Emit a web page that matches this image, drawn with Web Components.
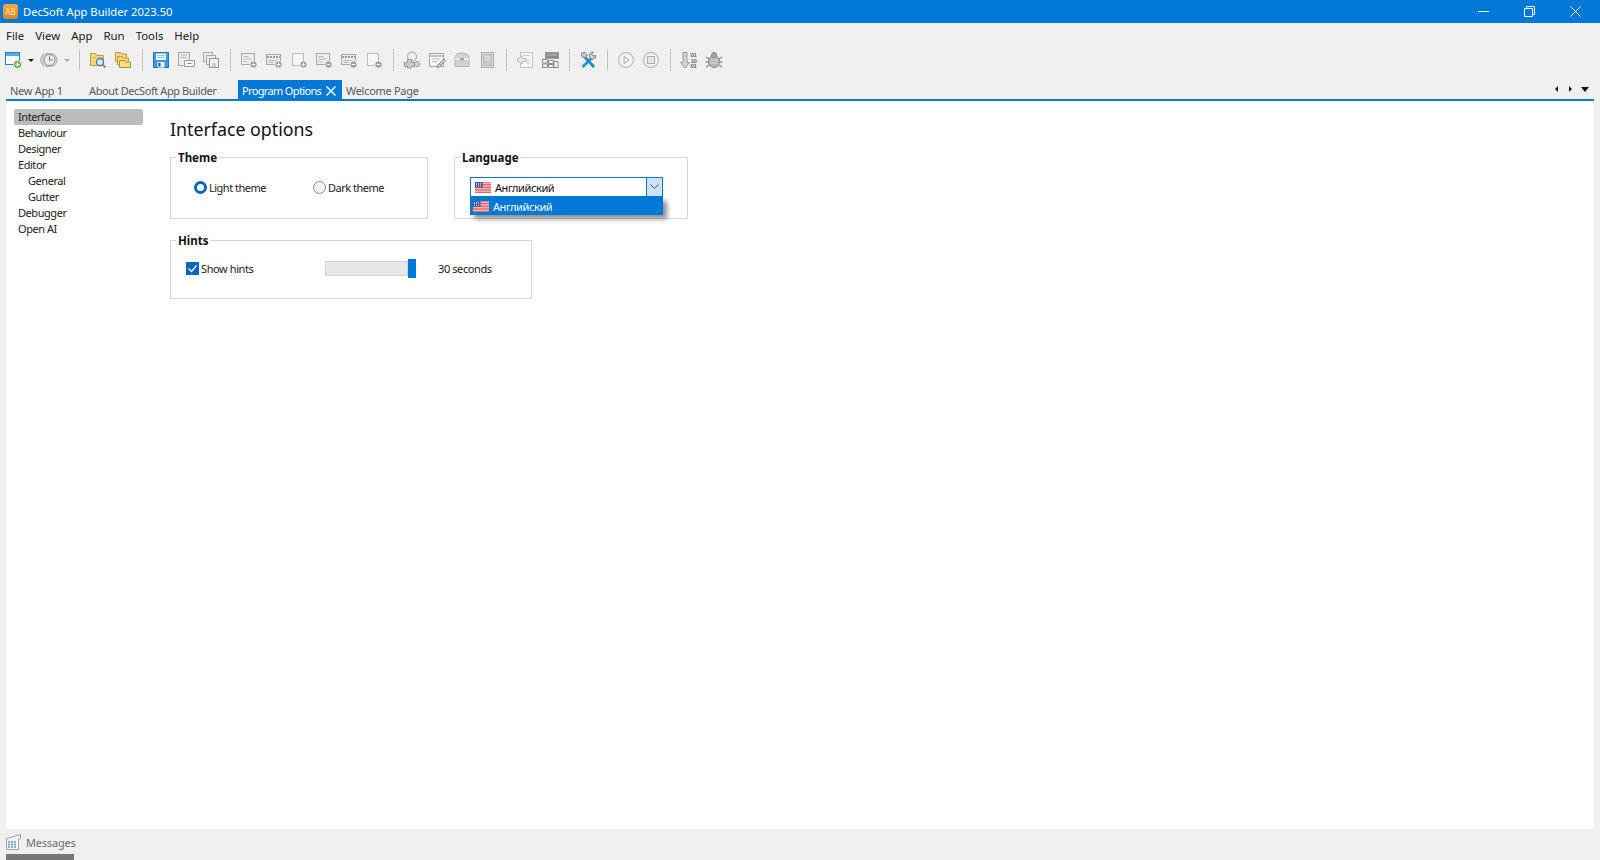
<!DOCTYPE html>
<html lang="en">
<head>
<meta charset="utf-8">
<title>DecSoft App Builder 2023.50</title>
<style>
  html, body { margin: 0; height: 100%; background: #f0f0f0; overflow: hidden; }
  body { font: 11px "Noto Sans", "Liberation Sans", sans-serif; letter-spacing: -.4px; color: #1a1a1a; }
</style>
</head>
<body>
<app-shell>
  <win-titlebar slot="title">DecSoft App Builder 2023.50</win-titlebar>
  <menu-bar slot="menu">
    <span>File</span><span>View</span><span>App</span><span>Run</span><span>Tools</span><span>Help</span>
  </menu-bar>
  <tool-bar slot="tools">
    <tool-btn icon="new"></tool-btn><tool-arrow></tool-arrow>
    <tool-btn icon="clock"></tool-btn><tool-arrow disabled></tool-arrow>
    <tool-sep></tool-sep>
    <tool-btn wide icon="folderSearch"></tool-btn><tool-btn wide icon="folders"></tool-btn>
    <tool-sep></tool-sep>
    <tool-btn wide icon="save"></tool-btn><tool-btn wide icon="saveAs"></tool-btn><tool-btn wide icon="saveAll"></tool-btn>
    <tool-sep></tool-sep>
    <tool-btn wide icon="formAdd"></tool-btn><tool-btn wide icon="barAdd"></tool-btn><tool-btn wide icon="blankAdd"></tool-btn>
    <tool-btn wide icon="formDel"></tool-btn><tool-btn wide icon="barDel"></tool-btn><tool-btn wide icon="blankDel"></tool-btn>
    <tool-sep></tool-sep>
    <tool-btn wide icon="puzzle"></tool-btn><tool-btn wide icon="note"></tool-btn><tool-btn wide icon="box"></tool-btn><tool-btn wide icon="book"></tool-btn>
    <tool-sep></tool-sep>
    <tool-btn wide icon="back"></tool-btn><tool-btn wide icon="grid"></tool-btn>
    <tool-sep></tool-sep>
    <tool-btn wide icon="tools"></tool-btn>
    <tool-sep></tool-sep>
    <tool-btn wide icon="play"></tool-btn><tool-btn wide icon="stop"></tool-btn>
    <tool-sep></tool-sep>
    <tool-btn wide icon="binary"></tool-btn><tool-btn wide icon="bug"></tool-btn>
  </tool-bar>
  <tab-strip slot="tabs">
    <tab-item style="width:79px">New App 1</tab-item>
    <tab-item style="width:153px;letter-spacing:-.4px">About DecSoft App Builder</tab-item>
    <tab-item active style="width:104px">Program Options</tab-item>
    <tab-item style="width:84px">Welcome Page</tab-item>
  </tab-strip>
  <option-nav slot="nav">
    <nav-item selected>Interface</nav-item>
    <nav-item>Behaviour</nav-item>
    <nav-item>Designer</nav-item>
    <nav-item>Editor</nav-item>
    <nav-item sub>General</nav-item>
    <nav-item sub>Gutter</nav-item>
    <nav-item>Debugger</nav-item>
    <nav-item>Open AI</nav-item>
  </option-nav>
  <options-page slot="page" heading="Interface options">
    <group-box legend="Theme" style="width:258px;height:62px">
      <div style="display:flex;padding:13px 0 0 23px">
        <radio-opt checked style="width:119px">Light theme</radio-opt>
        <radio-opt>Dark theme</radio-opt>
      </div>
    </group-box>
    <group-box legend="Language" style="width:234px;height:62px">
      <lang-combo style="margin:11px 0 0 15px">Английский</lang-combo>
    </group-box>
    <group-box break legend="Hints" style="width:362px;height:59px">
      <div style="display:flex;align-items:center;padding:10px 0 0 15px">
        <check-opt checked style="width:139px">Show hints</check-opt>
        <hint-slider>30 seconds</hint-slider>
      </div>
    </group-box>
  </options-page>
  <status-tab slot="status">Messages</status-tab>
</app-shell>

<script>
/**
 * Toolbar icon bodies, all on a 18x18 box
 */
const GREY = 'fill="#ececec" stroke="#a9a9a9"';
const badge = (sign) => `<circle cx="13.5" cy="13.5" r="3.5" fill="#9a9a9a" stroke="#e4e4e4"/>
  <path d="M11.7 13.5h3.6${sign === '+' ? 'M13.5 11.7v3.6' : ''}" stroke="#fff" stroke-width="1.2"/>`;
const formBody = `<rect x="1.5" y="2.5" width="13" height="11" ${GREY}/><path d="M3.5 5.5h5M3.5 8h8M3.5 10.5h3" stroke="#b9b9b9"/>`;
const barBody = `<rect x="1.5" y="3.5" width="14" height="10" ${GREY}/><path d="M2 6h13" stroke="#9d9d9d" stroke-width="2" stroke-dasharray="2 1"/><path d="M3.5 9.500h8M3.5 11.500h5" stroke="#b9b9b9"/>`;
const blankBody = `<rect x="2.500" y="2.500" width="11" height="12" fill="#f6f6f6" stroke="#bdbdbd"/>`;

const ICONS = {
  new: `<rect x="1.500" y="1.500" width="14" height="12" fill="#f7fbff" stroke="#1a80c8"/><rect x="2" y="2" width="13" height="3" fill="#5aa9df"/>
    <circle cx="13.500" cy="13.500" r="4" fill="#59a824" stroke="#e9f5dc"/><path d="M11.300 13.500h4.400M13.500 11.300v4.400" stroke="#fff" stroke-width="1.400"/>`,
  clock: `<circle cx="10.500" cy="9" r="6.500" fill="#dcdcdc" stroke="#a5a5a5"/><circle cx="7" cy="9" r="6.500" fill="#cfcfcf" stroke="#b0b0b0"/>
    <circle cx="9.500" cy="9" r="5.500" fill="#ececec" stroke="#8f8f8f"/><path d="M9.500 5.500v3.500h3" fill="none" stroke="#6f6f6f"/>`,
  folderSearch: `<path d="M1.500 14.500v-12h5l1.500 2h6.500v10z" fill="#f9d77e" stroke="#c79a3a"/><path d="M1.500 6.500h13" stroke="#e4b95c"/>
    <circle cx="11" cy="11" r="3.500" fill="#d9ecf9" stroke="#3f7fae" stroke-width="1.300"/><path d="M13.500 13.500l3 3" stroke="#c27a2c" stroke-width="2"/>`,
  folders: `<path d="M1.500 10.500v-9h5l1 1.500h5v7.500z" fill="#f6d98e" stroke="#c39a42"/><path d="M3.500 13.500v-8h5l1 1.500h5v6.500z" fill="#f9d77e" stroke="#c39a42"/>
    <path d="M5.500 16.500v-7h5l1 1.500h5v5.500z" fill="#fbdc86" stroke="#bd9035"/>`,
  save: `<path d="M1.500 1.500h15v15h-15z" fill="#3c9ae0" stroke="#1a78b8"/><rect x="4" y="2.500" width="10" height="6.500" fill="#f6fbfe"/>
    <path d="M5 4.500h8M5 6.500h8" stroke="#9cc9e8"/><rect x="5.500" y="11" width="7" height="5.500" fill="#eef4f8"/><rect x="6.500" y="12" width="2" height="3.500" fill="#24527a"/>`,
  saveAs: `<rect x="1.500" y="1.500" width="11" height="13" ${GREY}/><path d="M4 4h6M4 6.500h6" stroke="#bbb"/>
    <rect x="7.500" y="9.500" width="10" height="6" fill="#f5f5f5" stroke="#a0a0a0"/><path d="M10.500 12.500h4" stroke="#888"/>`,
  saveAll: `<rect x="1.500" y="1.500" width="9" height="9" ${GREY}/><rect x="4.500" y="4.500" width="9" height="9" ${GREY}/>
    <rect x="7.500" y="7.500" width="9" height="9" fill="#f0f0f0" stroke="#999"/><rect x="10" y="12" width="4" height="4" fill="#ccc"/>`,
  formAdd: formBody + badge('+'),
  barAdd: barBody + badge('+'),
  blankAdd: blankBody + badge('+'),
  formDel: formBody + badge('-'),
  barDel: barBody + badge('-'),
  blankDel: blankBody + badge('-'),
  puzzle: `<circle cx="9" cy="5.500" r="4.500" fill="#efefef" stroke="#a2a2a2"/><path d="M1.500 11.500h3v-3h4v3h3v4h-3v1.500h-4v-1.500h-3z" fill="#c8c8c8" stroke="#9a9a9a"/><circle cx="14" cy="13" r="2.500" fill="#d5d5d5" stroke="#9a9a9a"/>`,
  note: `<rect x="1.500" y="2.500" width="14" height="13" fill="#f7f7f7" stroke="#a5a5a5"/><path d="M2 5h13" stroke="#b5b5b5" stroke-width="1.500"/><path d="M4 8h8M4 10.500h5" stroke="#c0c0c0"/>
    <path d="M9 15l7-7 1.500 1.500-7 7H9z" fill="#c9c9c9" stroke="#8e8e8e"/>`,
  box: `<path d="M2 15.500V7c0-3 3-5 7-5s7 2 7 5v8.500z" fill="#d2d2d2" stroke="#b0b0b0"/><path d="M2 8h14" stroke="#f2f2f2" stroke-width="1.500"/><rect x="7" y="7" width="4" height="2.500" fill="#a9a9a9"/>`,
  book: `<rect x="3.500" y="1.500" width="12" height="15" fill="#dcdcdc" stroke="#ababab"/><rect x="5.500" y="3.500" width="8" height="11" fill="#cacaca" stroke="#bbb"/><path d="M7 6h5M7 8.500h5" stroke="#eee"/>`,
  back: `<rect x="4.500" y="1.500" width="12" height="15" fill="#f5f5f5" stroke="#c4c4c4"/><path d="M7 4.500h7M10 12h4M10 9h4" stroke="#cfcfcf"/><path d="M1 9l5-4v2.500h4v3H6V13z" fill="#eee" stroke="#b8b8b8"/>`,
  grid: `<rect x="4.500" y="1.500" width="13" height="6" fill="#8d8d8d" stroke="#9a9a9a"/><path d="M6 4h10" stroke="#bcbcbc"/>
    <path d="M1.500 8.500h5v3.500h-5zM7.500 9.500h5v3h-5zM1.500 13h5v3.500h-5zM7.500 13.500h5v3h-5zM13 10.500h4v6h-4z" fill="#f3f3f3" stroke="#8c8c8c"/>`,
  tools: `<path d="M3.500 16L15 5" stroke="#2a93d6" stroke-width="2.800"/><path d="M4 4l11 12" stroke="#1f8ad0" stroke-width="2.800"/>
    <path d="M2 3l3-2 3.500 3-2.500 3-3-1.500z" fill="#c6c6c6" stroke="#858585"/><path d="M17 4.500a3.800 3.800 0 0 1-5 3.500l-1.500-2a3.800 3.800 0 0 1 4-5l-2 2.500 2 1.500z" fill="#d2d2d2" stroke="#808080"/>`,
  play: `<circle cx="9" cy="9" r="7.500" fill="#f3f3f3" stroke="#c4c4c4" stroke-width="1.500"/><path d="M7 5.500l5 3.500-5 3.500z" fill="#f3f3f3" stroke="#ababab"/>`,
  stop: `<circle cx="9" cy="9" r="7.500" fill="#f3f3f3" stroke="#c4c4c4" stroke-width="1.500"/><rect x="5.500" y="5.500" width="7" height="7" fill="#e6e6e6" stroke="#ababab"/>`,
  binary: `<path d="M3 1.500h4v10h2.500L5 17l-4.500-5.500H3z" fill="#d4d4d4" stroke="#9a9a9a"/>
    <g font-size="6" font-weight="700" fill="#666" font-family="Liberation Sans"><text x="10.500" y="6">01</text><text x="10.500" y="11.500">10</text><text x="10.500" y="17">01</text></g>`,
  bug: `<ellipse cx="9" cy="10.500" rx="5.500" ry="6" fill="#b5b5b5" stroke="#8a8a8a"/><circle cx="9" cy="4" r="2.500" fill="#a8a8a8" stroke="#8a8a8a"/>
    <path d="M1 6l3 2M17 6l-3 2M.5 11h3M17.500 11h-3M1 16l3-2M17 16l-3-2" stroke="#8f8f8f" stroke-width="1.300"/><path d="M5 9h8M5 12h8" stroke="#d7d7d7"/>`
};

/**
 * Small helper: every element below gets its shadow root the same way
 */
class Base extends HTMLElement {
  constructor() {
    super();
    this.attachShadow({ mode: 'open' });
  }

  connectedCallback() {
    this.shadowRoot.innerHTML = this.render();
  }
}

/**
 * AppShell - the whole window, stacked bars plus the white options panel
 */
class AppShell extends Base {
  render() {
    return `
      <style>
        :host { display: flex; flex-direction: column; height: 860px; overflow: hidden; }
        .panel { display: flex; flex: 1; min-height: 0; margin: 0 6px; background: #fff; }
      </style>
      <slot name="title"></slot>
      <slot name="menu"></slot>
      <slot name="tools"></slot>
      <slot name="tabs"></slot>
      <div class="panel">
        <slot name="nav"></slot>
        <slot name="page"></slot>
      </div>
      <slot name="status"></slot>
    `;
  }
}

class WinTitlebar extends Base {
  render() {
    return `
      <style>
        :host { display: flex; align-items: center; height: 23px; background: #0078d7; color: #fff; font-size: 11.2px; letter-spacing: 0; }
        .logo { display: flex; align-items: center; justify-content: center; width: 15px; height: 15px; margin: 0 5px 0 3px;
          border-radius: 3px; background: linear-gradient(#f7a83c, #e8831a); font-size: 8px; line-height: 1; color: #ffe9c9; }
        .text { flex: 1; }
        .btn { display: flex; align-items: center; justify-content: center; width: 46px; height: 23px; }
        svg { display: block; fill: none; stroke: #fff; stroke-width: 1; }
      </style>
      <span class="logo">AB</span>
      <span class="text"><slot></slot></span>
      <span class="btn"><svg width="11" height="11"><path d="M0 5.500h11"/></svg></span>
      <span class="btn"><svg width="11" height="11"><path d="M.5 2.500h8v8h-8zM2.500 2.500v-2h8v8h-2"/></svg></span>
      <span class="btn" style="margin-right:2px"><svg width="11" height="11"><path d="M.5.500l10 10M10.500.500l-10 10"/></svg></span>
    `;
  }
}

class MenuBar extends Base {
  render() {
    return `
      <style>
        :host { display: flex; align-items: center; box-sizing: border-box; height: 23px; padding: 2px 0 0 6px; gap: 11px; font-size: 11.4px; letter-spacing: 0; }
      </style>
      <slot></slot>
    `;
  }
}

class ToolBar extends Base {
  render() {
    return `
      <style>
        :host { display: flex; align-items: center; box-sizing: border-box; height: 30px; padding: 0 0 2px 1px; }
      </style>
      <slot></slot>
    `;
  }
}

class ToolBtn extends Base {
  render() {
    const body = ICONS[this.getAttribute('icon')] || '';
    const wide = this.hasAttribute('wide');
    return `
      <style>
        :host { display: flex; justify-content: center; flex: none; width: ${wide ? 25 : 24}px; }
        svg { display: block; ${wide ? 'margin-left: -2px;' : ''} }
      </style>
      <svg width="18" height="18" viewBox="0 0 18 18">${body}</svg>
    `;
  }
}

class ToolArrow extends Base {
  render() {
    return `
      <style>
        :host { display: flex; justify-content: center; flex: none; width: 12px; }
        i { border: 3px solid transparent; border-top: 3px solid ${this.hasAttribute('disabled') ? '#a8a8a8' : '#222'}; border-bottom: 0; }
      </style>
      <i></i>
    `;
  }
}

class ToolSep extends Base {
  render() {
    return `
      <style>
        :host { display: flex; justify-content: center; flex: none; width: 13px; }
        i { width: 1px; height: 22px; background: #c4c4c4; }
      </style>
      <i></i>
    `;
  }
}

/**
 * TabStrip - document tabs with the scroll buttons on the right
 */
class TabStrip extends Base {
  render() {
    return `
      <style>
        :host { display: flex; align-items: flex-end; height: 23px; margin: 0 6px; border-bottom: 2px solid #0a78cc; }
        .tabs { display: flex; flex: 1; height: 19px; }
        .scroll { display: flex; align-items: center; gap: 11px; height: 20px; margin-right: 5px; }
        i { border: 3.500px solid transparent; }
        .l { border-left: 0; border-right-color: #111; }
        .r { border-right: 0; border-left-color: #111; }
        .d { border-width: 5px 4px 0; border-top-color: #111; margin-left: -2px; }
      </style>
      <div class="tabs"><slot></slot></div>
      <div class="scroll"><i class="l"></i><i class="r"></i><i class="d"></i></div>
    `;
  }
}

class TabItem extends Base {
  render() {
    const active = this.hasAttribute('active');
    return `
      <style>
        :host { display: flex; align-items: center; box-sizing: border-box; flex: none; height: 19px; padding: 2px 0 0 4px; color: #5a5a5a; letter-spacing: -.3px; }
        :host([active]) { background: #0078d7; color: #fff; letter-spacing: -.65px; }
        span { white-space: nowrap; }
        svg { margin-left: auto; margin-right: 6px; flex: none; }
      </style>
      <span><slot></slot></span>
      ${active ? '<svg width="10" height="10" fill="none" stroke="#fff" stroke-width="1.500"><path d="M.5.500l9 9M9.500.500l-9 9"/></svg>' : ''}
    `;
  }
}

class OptionNav extends Base {
  render() {
    return `
      <style>
        :host { display: flex; flex-direction: column; flex: none; width: 129px; margin: 8px 0 0 8px; letter-spacing: -.45px; }
      </style>
      <slot></slot>
    `;
  }
}

class NavItem extends Base {
  render() {
    return `
      <style>
        :host { display: flex; align-items: center; box-sizing: border-box; height: 16px; padding: 0 0 1px 4px; border-radius: 2px; color: #222; }
        :host([sub]) { padding-left: 14px; }
        :host([selected]) { background: #bcbcbc; }
      </style>
      <slot></slot>
    `;
  }
}

/**
 * OptionsPage - heading plus a wrapping row of group boxes
 */
class OptionsPage extends Base {
  render() {
    return `
      <style>
        :host { display: block; flex: 1; padding: 16px 0 0 27px; }
        h1 { margin: 0 0 16px 0; font-size: 17.8px; font-weight: 400; line-height: 24px; letter-spacing: 0; color: #111; }
        .groups { display: flex; flex-wrap: wrap; column-gap: 26px; row-gap: 21px; width: 560px; }
      </style>
      <h1>${this.getAttribute('heading')}</h1>
      <div class="groups"><slot></slot></div>
    `;
  }
}

class GroupBox extends Base {
  render() {
    return `
      <style>
        :host { display: block; box-sizing: border-box; flex: none; border: 1px solid #d6d6d6; }
        :host([break]) { flex-basis: 362px; }
        .legend { display: block; width: max-content; margin: -8px 0 0 5px; padding: 0 2px; height: 16px; line-height: 16px;
          background: #fff; font-size: 11.500px; font-weight: 700; letter-spacing: 0; color: #111; }
      </style>
      <span class="legend">${this.getAttribute('legend')}</span>
      <slot></slot>
    `;
  }
}

class RadioOpt extends Base {
  render() {
    return `
      <style>
        :host { display: flex; align-items: center; gap: 2px; height: 16px; color: #222; letter-spacing: -.5px; }
        i { box-sizing: border-box; flex: none; width: 13px; height: 13px; border-radius: 50%; border: 1px solid #8a8a8a; background: #f4f4f4; }
        :host([checked]) i { border: 3.500px solid #0067c0; background: #fff; }
      </style>
      <i></i><slot></slot>
    `;
  }
}

class CheckOpt extends Base {
  render() {
    return `
      <style>
        :host { display: flex; align-items: center; gap: 2px; height: 16px; color: #222; }
        svg { display: block; flex: none; }
      </style>
      <svg width="13" height="13"><rect width="13" height="13" fill="#0067c0"/><path d="M2.500 6.500l3 3 5-6" fill="none" stroke="#fff" stroke-width="1.300"/></svg>
      <slot></slot>
    `;
  }
}

class HintSlider extends Base {
  render() {
    return `
      <style>
        :host { display: flex; align-items: center; }
        .track { box-sizing: border-box; width: 83px; height: 15px; background: #e6e8e8; border: 1px solid #d4d4d4; }
        .thumb { width: 8px; height: 19px; background: #0078d7; margin-right: 22px; }
      </style>
      <div class="track"></div><div class="thumb"></div><slot></slot>
    `;
  }
}

const FLAG = `<svg width="16" height="11" viewBox="0 0 16 11" style="display:block;flex:none">
  <rect width="16" height="11" fill="#f4f1f1"/>
  <path d="M0 .8h16M0 2.400h16M0 4h16M0 5.600h16M0 7.200h16M0 8.800h16M0 10.400h16" stroke="#d8474a" stroke-width=".9"/>
  <rect width="7.500" height="5.600" fill="#3a4f9f"/><path d="M1 1.400h6M1 2.800h6M1 4.200h6" stroke="#dfe4f5" stroke-dasharray="1 1"/></svg>`;

/**
 * LangCombo - combobox drawn open, the list lies over the group box border
 */
class LangCombo extends Base {
  render() {
    return `
      <style>
        :host { display: block; position: relative; box-sizing: border-box; width: 193px; height: 20px; }
        .field { display: flex; align-items: center; box-sizing: border-box; height: 20px; gap: 4px; padding-left: 4px;
          border: 1px solid #0078d7; color: #111; }
        .btn { display: flex; align-items: center; justify-content: center; position: absolute; right: 0; top: 0; box-sizing: border-box;
          width: 17px; height: 20px; border: 1px solid #0078d7; background: #cce4f7; }
        .list { display: flex; align-items: center; gap: 4px; position: absolute; left: 0; top: 20px; box-sizing: border-box; width: 193px; height: 18px;
          padding-left: 3px; background: #0078d7; color: #fff; box-shadow: 4px 4px 5px rgba(0,0,0,.45); }
      </style>
      <div class="field">${FLAG}<span><slot></slot></span></div>
      <div class="btn"><svg width="9" height="6" fill="none" stroke="#456"><path d="M.5.500l4 4 4-4"/></svg></div>
      <div class="list">${FLAG}<span>${this.textContent}</span></div>
    `;
  }
}

class StatusTab extends Base {
  render() {
    return `
      <style>
        :host { display: flex; flex-direction: column; flex: none; width: 68px; height: 31px; margin-left: 6px; color: #6e6e6e; letter-spacing: -.2px; }
        .row { display: flex; align-items: center; box-sizing: border-box; gap: 5px; height: 25px; padding-top: 2px; white-space: nowrap; }
        .bar { height: 6px; background: #777; }
        svg { display: block; flex: none; }
      </style>
      <div class="row">
        <svg width="15" height="17" viewBox="0 0 15 17"><path d="M.5 4.500l14-4v4l-2 1v10h-12z" fill="#f4f4f4" stroke="#a3a3a3"/>
          <path d="M2 8h8M2 10.500h8M2 13h8" stroke="#6f93ad" stroke-width="1.500" stroke-dasharray="2 1"/></svg>
        <span><slot></slot></span>
      </div>
      <div class="bar"></div>
    `;
  }
}

// Register everything straight away, no delay
customElements.define('app-shell', AppShell);
customElements.define('win-titlebar', WinTitlebar);
customElements.define('menu-bar', MenuBar);
customElements.define('tool-bar', ToolBar);
customElements.define('tool-btn', ToolBtn);
customElements.define('tool-arrow', ToolArrow);
customElements.define('tool-sep', ToolSep);
customElements.define('tab-strip', TabStrip);
customElements.define('tab-item', TabItem);
customElements.define('option-nav', OptionNav);
customElements.define('nav-item', NavItem);
customElements.define('options-page', OptionsPage);
customElements.define('group-box', GroupBox);
customElements.define('radio-opt', RadioOpt);
customElements.define('check-opt', CheckOpt);
customElements.define('hint-slider', HintSlider);
customElements.define('lang-combo', LangCombo);
customElements.define('status-tab', StatusTab);
</script>
</body>
</html>
